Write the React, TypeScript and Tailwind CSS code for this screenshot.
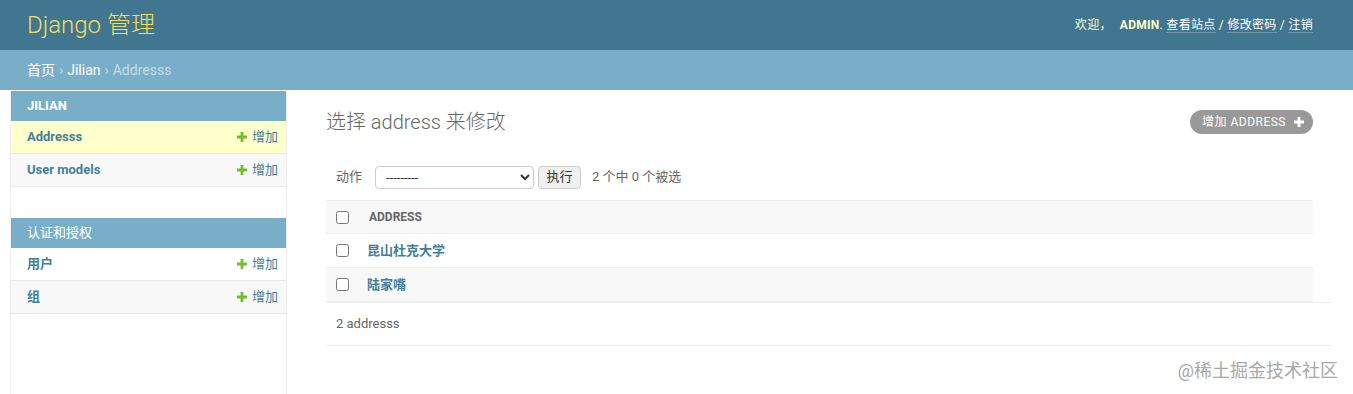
import React from "react";

const font = "font-['Roboto','Noto_Sans_CJK_SC',sans-serif]";

function Plus({ className }: { className?: string }) {
  return (
    <svg viewBox="0 0 10 10" className={className} aria-hidden="true">
      <path d="M3.6 0h2.8v3.6H10v2.8H6.4V10H3.6V6.4H0V3.6h3.6z" fill="currentColor" />
    </svg>
  );
}

function SideRow({ label, current, shaded }: { label: string; current?: boolean; shaded?: boolean }) {
  return (
    <div
      className={`flex h-[33px] items-center justify-between border-b border-[#e8e8e8] pl-[16px] pr-[8px] ${
        current ? "bg-[#ffffcc]" : shaded ? "bg-[#f8f8f8]" : "bg-white"
      }`}
    >
      <a className="text-[13px] font-bold text-[#447e9b]">{label}</a>
      <a className="flex items-center gap-[5px] text-[13px] text-[#447e9b]">
        <Plus className="h-[10px] w-[10px] text-[#70bf2b]" />
        增加
      </a>
    </div>
  );
}

function Caption({ children }: { children: React.ReactNode }) {
  return (
    <div className="flex h-[30px] items-center bg-[#79aec8] pl-[16px] text-[13px] font-bold uppercase text-white">
      {children}
    </div>
  );
}

function ResultRow({ name, shaded }: { name: string; shaded?: boolean }) {
  return (
    <div className={`flex h-[34px] items-center border-b border-[#eee] ${shaded ? "bg-[#f8f8f8]" : "bg-white"}`}>
      <div className="w-[41px] pl-[10px]">
        <input type="checkbox" className="block h-[13px] w-[13px]" />
      </div>
      <a className="text-[13px] font-bold text-[#447e9b]">{name}</a>
    </div>
  );
}

export default function App() {
  return (
    <div className={`relative flex min-h-[394px] flex-col bg-white ${font}`}>
      {/* header */}
      <div className="flex h-[50px] items-center justify-between bg-[#417690] pl-[27px] pr-[40px]">
        <h1 className="text-[24px] font-light text-[#f5dd5d]">Django 管理</h1>
        <div className="text-[12px] uppercase tracking-[0.3px] text-[#ffffcc]">
          欢迎，
          <strong className="ml-[8px] font-bold">admin</strong>.{" "}
          <a className="border-b border-white/25 text-white">查看站点</a> /{" "}
          <a className="border-b border-white/25 text-white">修改密码</a> /{" "}
          <a className="border-b border-white/25 text-white">注销</a>
        </div>
      </div>

      {/* breadcrumbs */}
      <div className="flex h-[40px] items-center bg-[#79aec8] pl-[27px] text-[14px] text-[#c4dce8]">
        <a className="text-white">首页</a>
        <span className="mx-[4px]">›</span>
        <a className="text-white">Jilian</a>
        <span className="mx-[4px]">›</span>
        Addresss
      </div>

      <div className="flex flex-1">
        {/* sidebar toggle */}
        <div className="w-[11px] overflow-hidden border-r border-[#eee]">
          <span className="-ml-[7px] mt-[258px] block text-[15px] text-[#447e9b]">«</span>
        </div>

        {/* sidebar */}
        <div className="w-[276px] border-r border-[#eee] pt-px">
          <div className="mb-[31px]">
            <Caption>Jilian</Caption>
            <SideRow label="Addresss" current />
            <SideRow label="User models" shaded />
          </div>
          <div>
            <Caption>
              <span className="font-normal">认证和授权</span>
            </Caption>
            <SideRow label="用户" />
            <SideRow label="组" shaded />
          </div>
        </div>

        {/* content */}
        <div className="flex-1 pl-[39px] pr-[40px] pt-[20px]">
          <div className="flex h-[24px] items-center justify-between">
            <h1 className="text-[20px] font-light text-[#666]">选择 address 来修改</h1>
            <a className="flex h-[24px] items-center gap-[8px] rounded-full bg-[#999] pl-[12px] pr-[9px] text-[12px] uppercase tracking-[0.5px] text-white">
              增加 address
              <Plus className="h-[10px] w-[10px] text-white" />
            </a>
          </div>

          <div className="mb-[2px] mt-[22px] flex h-[42px] items-center pl-[10px] text-[13px] text-[#666]">
            <span>动作</span>
            <select className="ml-[13px] h-[23px] w-[159px] rounded-[4px] border border-[#ccc] bg-white pl-[6px] text-[13px] text-[#333]">
              <option>---------</option>
            </select>
            <button className="ml-[4px] h-[23px] w-[43px] rounded-[4px] border border-[#ccc] bg-[#f0f0f0] text-[13px] text-[#333]">
              执行
            </button>
            <span className="ml-[11px]">2 个中 0 个被选</span>
          </div>

          <div>
            <div className="flex h-[34px] items-center border-y border-[#eee] bg-[#f8f8f8]">
              <div className="w-[43px] pl-[10px]">
                <input type="checkbox" className="block h-[13px] w-[13px]" />
              </div>
              <span className="text-[12px] font-bold uppercase text-[#666]">Address</span>
            </div>
            <ResultRow name="昆山杜克大学" />
            <ResultRow name="陆家嘴" shaded />
          </div>

          <div className="-mr-[20px] flex h-[44px] items-center border-y border-[#eee] pl-[10px] text-[13px] text-[#666]">
            2 addresss
          </div>
        </div>
      </div>

      <div className="absolute bottom-[10px] right-[15px] text-[18px] text-[#a8a8a8]">@稀土掘金技术社区</div>
    </div>
  );
}
